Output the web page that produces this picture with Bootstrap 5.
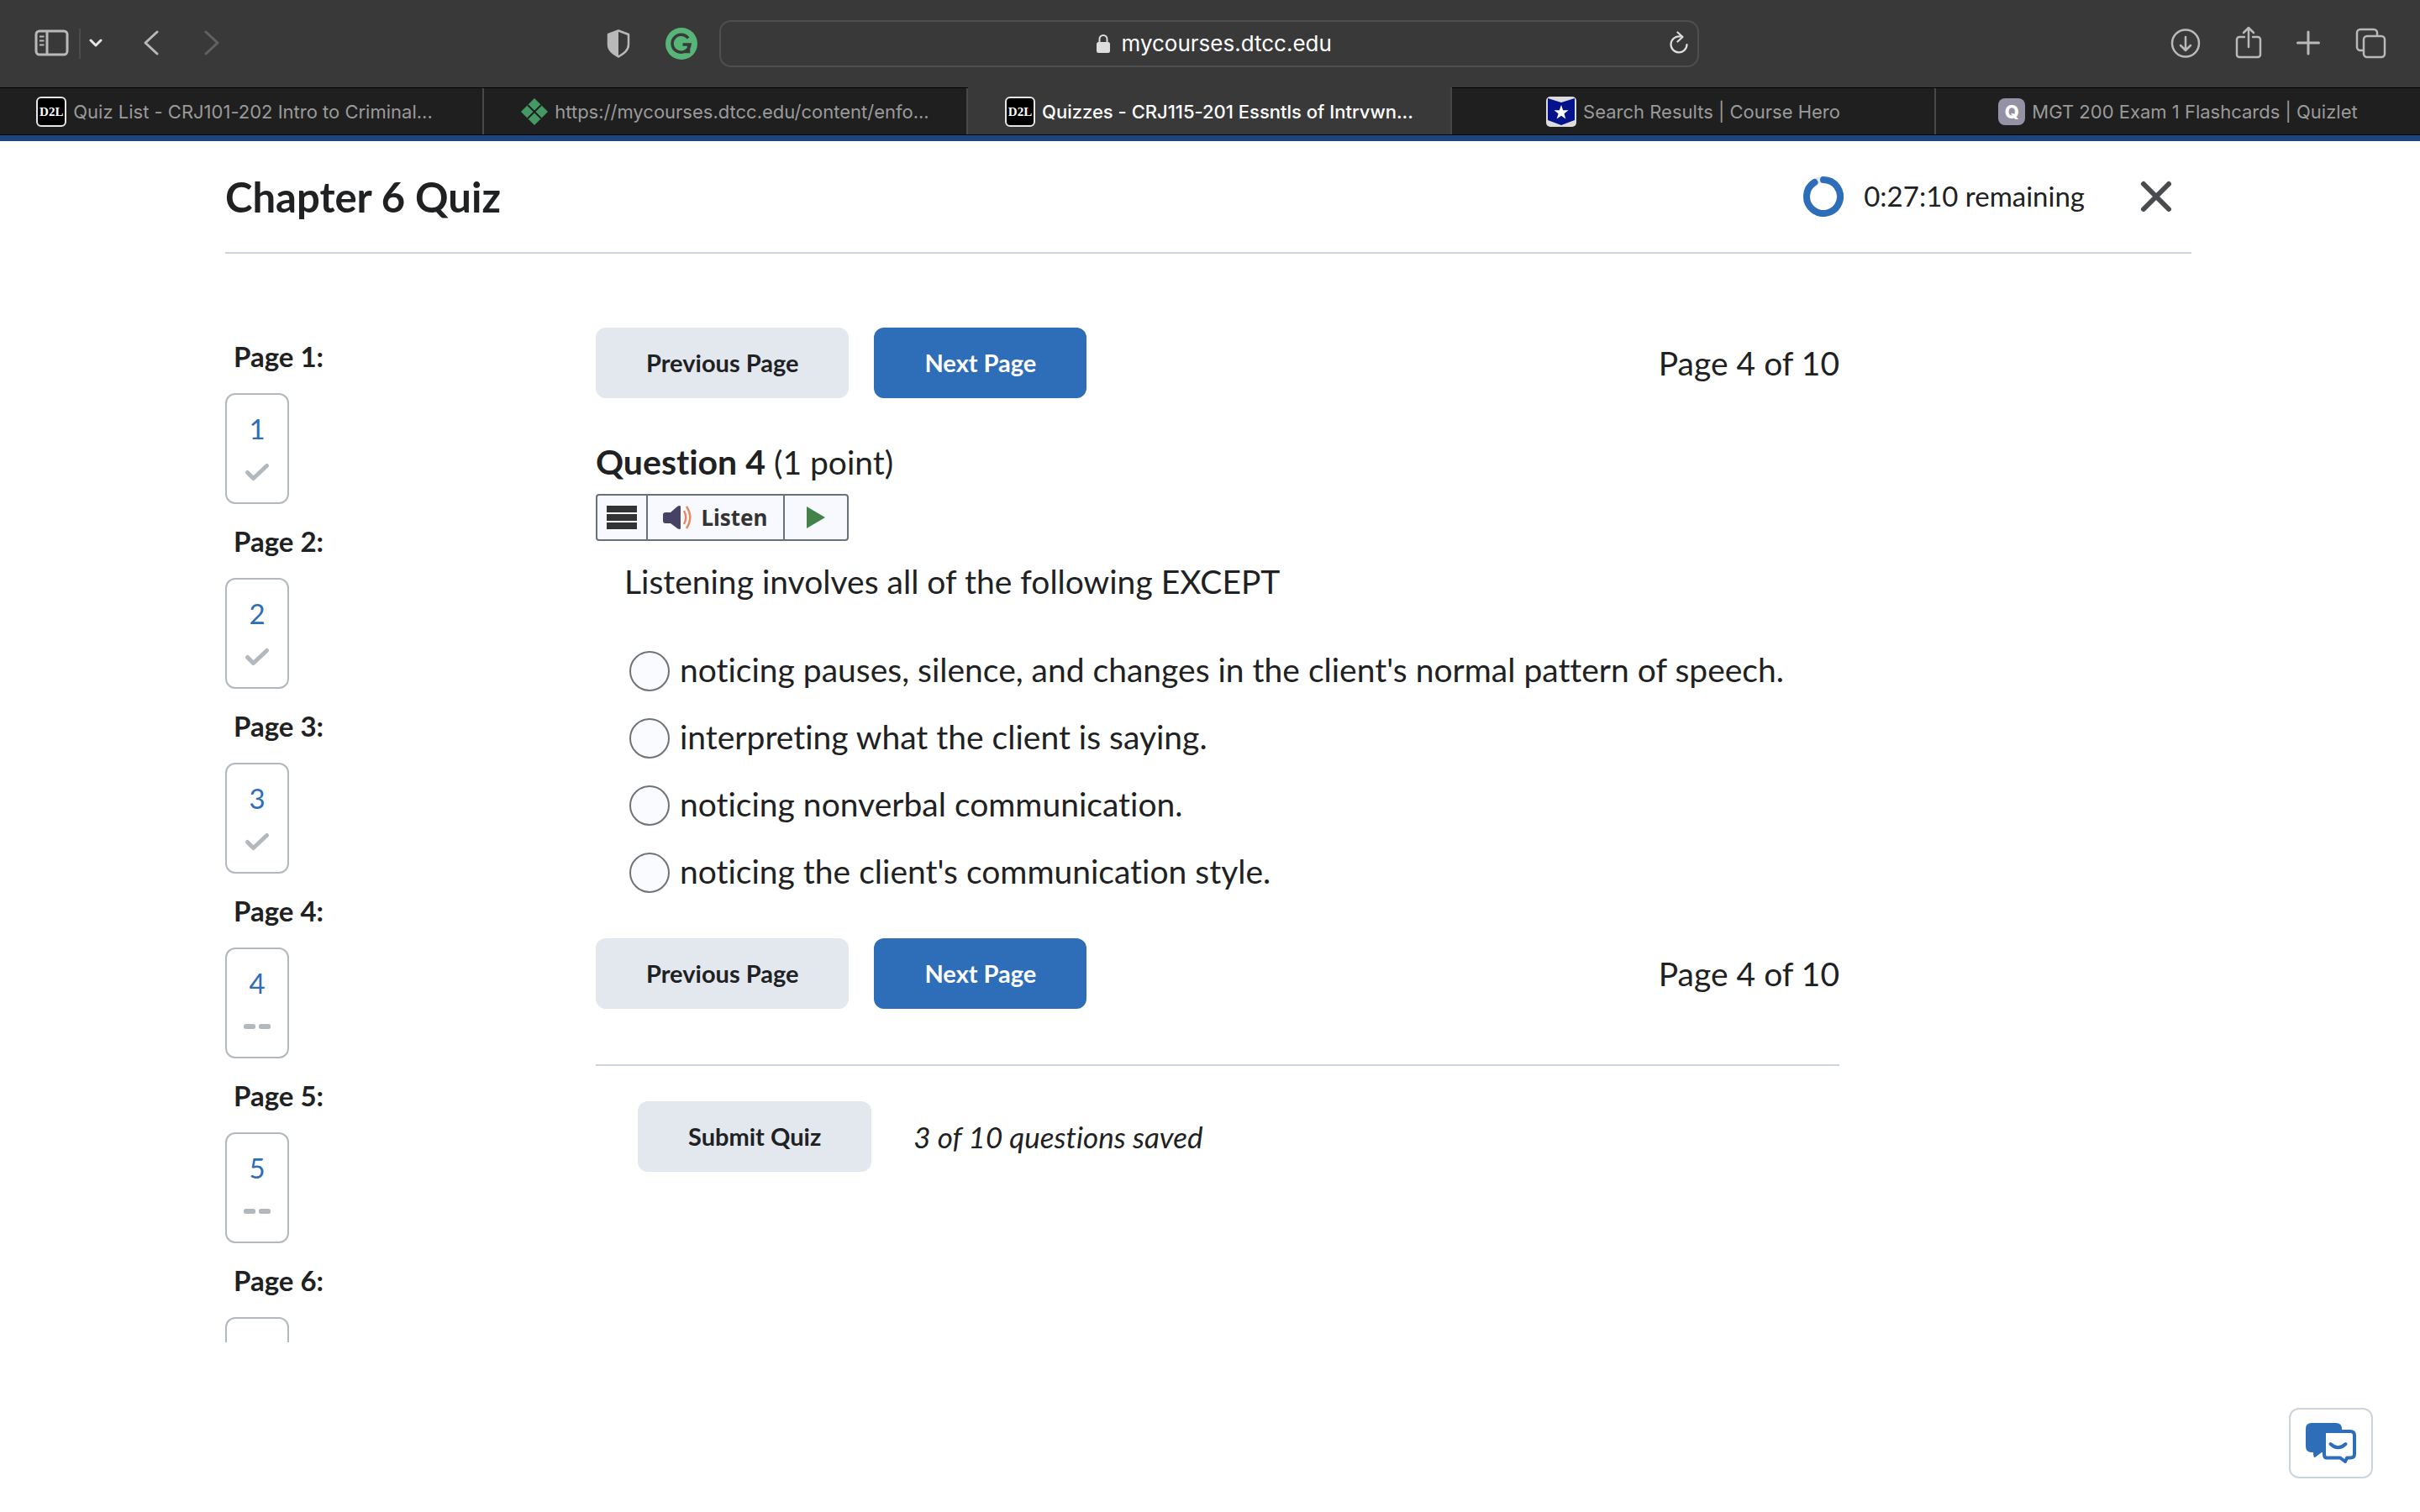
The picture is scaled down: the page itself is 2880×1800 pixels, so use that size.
<!DOCTYPE html>
<html lang="en">
<head>
<meta charset="utf-8">
<meta name="viewport" content="width=device-width, initial-scale=1">
<title>Quizzes - CRJ115-201</title>
<link rel="stylesheet" href="https://cdn.jsdelivr.net/npm/bootstrap@5.3.0/dist/css/bootstrap.min.css">
<style>
  body { font-family: Lato, sans-serif; color: #202122; background: #fff; font-size: 33px; min-height: 100vh; font-variant-ligatures: none; }
  svg { display: block; flex: none; }
  .plain-btn { background: none; border: 0; padding: 0; color: inherit; display: block; }

  /* browser chrome */
  .chrome-ui { font-family: Inter, sans-serif; color: #b9b9b9; }
  .toolbar { background: #393939; height: 104px; padding: 0 40px 0 38px; display: grid; grid-template-columns: 1fr 1166px 1fr; align-items: center; }
  .toolbar-left { padding-right: 26px; }
  .tool-rule { width: 2px; height: 36px; background: #4c4c4c; margin: 0 10px 0 12px; }
  .ext-btn { margin-left: 42px; }
  .tools { gap: 41px; }
  .address { height: 56px; border: 2px solid #4f4f4f; border-radius: 14px; color: #fff; position: relative; }
  .address input { background: none; border: 0; padding: 0; color: #fff; width: 252px; font-size: 26px; line-height: 32px; outline: 0; }
  .address .lock { margin: 0 13px 0 12px; }
  .address .plain-btn { position: absolute; right: 10px; top: 10px; }
  .tab-strip { border-top: 1px solid #000; border-bottom: 1px solid #000; height: 57px; background: #1f1f1f; }
  .tab-strip a { width: 20%; color: #9a9a9a; text-decoration: none; font-size: 22px; line-height: 28px; border-right: 2px solid #474747; gap: 8px; white-space: nowrap; }
  .tab-strip a:last-child { border-right: 0; }
  .tab-strip a.current { background: #393939; color: #fff; font-weight: 500; margin-top: -1px; padding-top: 1px; }
  .fav { width: 36px; height: 36px; flex: none; }
  .fav-d2l { background: #000; border: 2px solid #e6e6e6; border-radius: 6px; color: #fff; font: bold 15px/32px "Liberation Serif", serif; text-align: center; }
  .fav-q { width: 32px; height: 32px; background: #9492a4; border-radius: 8px; color: #fff; font-weight: 800; font-size: 22px; line-height: 32px; text-align: center; }
  .brand-line { height: 7px; background: #1c457d; }

  /* quiz */
  .quiz-shell { padding: 0 272px 0 268px; }
  .quiz-head { height: 132px; box-sizing: content-box; border-bottom: 2px solid #cdd5dc; }
  .quiz-head h1 { font-size: 49px; line-height: 56px; font-weight: 700; margin: 0; }
  .timer { gap: 24px; margin-right: 64px; }
  .quiz-head .plain-btn { margin-right: 21px; color: #494c4e; }
  .quiz-body { padding-top: 78px; }
  .page-nav { width: 441px; flex: none; height: calc(100vh - 582px); overflow: hidden; }
  .page-nav h2 { font-size: 33px; line-height: 88px; font-weight: 700; margin: 0; padding-left: 10px; }
  .q-box { width: 76px; height: 132px; border: 2px solid #b1b9be; border-radius: 12px; color: #2e6db8; text-decoration: none; line-height: 40px; padding-top: 20px; gap: 16px; }
  .quiz-main { flex: 1 1 auto; max-width: 1480px; padding-top: 10px; font-size: 39px; line-height: 48px; }
  .d2l-btn { --bs-btn-font-size: 29px; --bs-btn-font-weight: 700; --bs-btn-line-height: 36px; --bs-btn-padding-x: 60px; --bs-btn-border-width: 0; --bs-btn-border-radius: 12px; --bs-btn-color: #202122; --bs-btn-bg: #e3e8ef; --bs-btn-hover-bg: #cdd5dc; height: 84px; }
  .d2l-btn.primary { --bs-btn-color: #fff; --bs-btn-bg: #2e6db8; --bs-btn-hover-bg: #1c5295; --bs-btn-hover-color: #fff; }
  .pager .d-flex { gap: 30px; }
  .question h2 { font-size: 39px; line-height: 48px; font-weight: 400; margin: 52px 0 14px; }
  .question h2 b { font-size: 41px; }
  .reader { display: inline-flex; height: 56px; border: 2px solid #6a7279; border-radius: 4px; background: #f8f9fe; vertical-align: top; }
  .reader button { display: flex; align-items: center; justify-content: center; font: 700 26px/32px "Noto Sans", sans-serif; color: #333; gap: 9px; }
  .reader button + button { border-left: 2px solid #6a7279; }
  .r-menu { width: 58px; } .r-listen { width: 163px; } .r-play { width: 76px; }
  .prompt { margin: 24px 0 43px 34px; }
  .answers { padding-left: 40px; margin-bottom: 38px; }
  .answers .form-check { height: 80px; padding: 0; margin: 0; gap: 12px; }
  .answers .form-check-input { width: 48px; height: 48px; margin: 0; float: none; border: 2px solid #6e7376; background-color: #f9fbff; flex: none; }
  .answers label { padding-bottom: 4px; }
  .submit-row { border-top: 2px solid #cdd5dc; margin-top: 66px; padding: 42px 0 0 50px; gap: 50px; font-size: 35px; }
  .chat-btn { position: fixed; right: 56px; bottom: 40px; width: 100px; height: 84px; background: #fff; border: 2px solid #cdd5dc; border-radius: 12px; padding: 0; display: flex; align-items: center; justify-content: center; }
</style>
<script src="https://cdn.jsdelivr.net/npm/bootstrap@5.3.0/dist/js/bootstrap.bundle.min.js"></script>
</head>
<body>
<div class="chrome-ui">
  <div class="toolbar">
    <div class="toolbar-left d-flex align-items-center">
      <button class="plain-btn" aria-label="Sidebar"><svg width="44" height="36" viewBox="0 0 44 36" fill="none" stroke="#b9b9b9" stroke-width="3"><rect x="5" y="3" width="37" height="28" rx="4"/><path d="M18 3v28"/><path d="M9 9.500h5.500M9 14.500h5.500M9 19.500h5.500" stroke-width="2"/></svg></button>
      <span class="tool-rule"></span>
      <button class="plain-btn" aria-label="Tab groups"><svg width="16" height="36" viewBox="0 0 16 36" fill="none" stroke="#e6e6e6" stroke-width="3" stroke-linecap="round" stroke-linejoin="round"><path d="M2 14l6 6 6-6"/></svg></button>
      <button class="plain-btn ms-5" aria-label="Back"><svg width="20" height="36" viewBox="0 0 20 36" fill="none" stroke="#b9b9b9" stroke-width="3" stroke-linecap="round" stroke-linejoin="round"><path d="M17 4L3 17l14 13"/></svg></button>
      <button class="plain-btn ms-5" aria-label="Forward"><svg width="24" height="36" viewBox="0 0 24 36" fill="none" stroke="#616161" stroke-width="3" stroke-linecap="round" stroke-linejoin="round"><path d="M7 4l14 13L7 30"/></svg></button>
      <button class="plain-btn ms-auto" aria-label="Privacy report"><svg width="28" height="34" viewBox="0 0 28 34"><path d="M14 1.500L2 6v12c0 7 6 11 12 14.500C20 29 26 25 26 18V6z" fill="none" stroke="#b9b9b9" stroke-width="2.500" stroke-linejoin="round"/><path d="M14 1L2 6v12c0 7 6 11 12 14.500z" fill="#b9b9b9"/></svg></button>
      <button class="plain-btn ext-btn" aria-label="Grammarly"><svg width="38" height="38" viewBox="0 0 38 38"><circle cx="19" cy="19" r="19" fill="#57b578"/><path d="M27 12.500A10.500 10.500 0 1 0 29 20H20.500M27.500 20v8.500h-6" fill="none" stroke="#393939" stroke-width="3.500"/></svg></button>
    </div>
    <div class="address d-flex align-items-center justify-content-center">
      <svg width="18" height="24" viewBox="0 0 18 24" class="lock"><path d="M4.500 11V6.500a4.500 4.500 0 0 1 9 0V11" fill="none" stroke="#dedede" stroke-width="2"/><rect x="1" y="10" width="16" height="13" rx="2.500" fill="#dedede"/></svg>
      <input type="text" value="mycourses.dtcc.edu" aria-label="Address">
      <button class="plain-btn" aria-label="Reload"><svg width="24" height="30" viewBox="0 0 24 30" fill="none" stroke="#dedede" stroke-width="2.200" stroke-linecap="round" stroke-linejoin="round"><path d="M13.500 7.500A9.500 9.500 0 1 0 21.500 17M10.500 2.500l6 5.500-6 5.500"/></svg></button>
    </div>
    <div class="tools d-flex align-items-center justify-content-end">
      <button class="plain-btn" aria-label="Downloads"><svg width="36" height="36" viewBox="0 0 36 36" fill="none" stroke="#b9b9b9" stroke-width="2.500" stroke-linecap="round" stroke-linejoin="round"><circle cx="18" cy="17.500" r="16"/><path d="M18 10v15.500M12 20l6 6 6-6"/></svg></button>
      <button class="plain-btn" aria-label="Share"><svg width="32" height="42" viewBox="0 0 32 42" fill="none" stroke="#b9b9b9" stroke-width="2.500" stroke-linecap="round" stroke-linejoin="round"><path d="M11 13H5a3 3 0 0 0-3 3v18a3 3 0 0 0 3 3h22a3 3 0 0 0 3-3V16a3 3 0 0 0-3-3h-6M16 25V2M10 8l6-6 6 6"/></svg></button>
      <button class="plain-btn" aria-label="New tab"><svg width="28" height="32" viewBox="0 0 28 32" fill="none" stroke="#b9b9b9" stroke-width="3" stroke-linecap="round"><path d="M14 2v26M1.500 15h25"/></svg></button>
      <button class="plain-btn" aria-label="Tab overview"><svg width="38" height="38" viewBox="0 0 38 38" fill="none" stroke="#b9b9b9" stroke-width="2.500"><rect x="11" y="10" width="25" height="25" rx="4"/><path d="M11 27H7a4 4 0 0 1-4-4V6a4 4 0 0 1 4-4h16a4 4 0 0 1 4 4v4"/></svg></button>
    </div>
  </div>
  <nav class="tab-strip d-flex">
    <a href="#" class="d-flex align-items-center justify-content-center pe-3"><span class="fav fav-d2l">D2L</span><span>Quiz List - CRJ101-202 Intro to Criminal...</span></a>
    <a href="#" class="d-flex align-items-center justify-content-center"><svg width="32" height="32" viewBox="0 0 32 32"><path d="M16 0l16 16-16 16L0 16z" fill="#459a63"/><path d="M8 8l16 16M24 8L8 24" stroke="#1f1f1f" stroke-width="2"/></svg><span>https://mycourses.dtcc.edu/content/enfo...</span></a>
    <a href="#" class="current d-flex align-items-center justify-content-center"><span class="fav fav-d2l">D2L</span><span>Quizzes - CRJ115-201 Essntls of Intrvwn...</span></a>
    <a href="#" class="d-flex align-items-center justify-content-center"><svg width="36" height="36" viewBox="0 0 36 36"><rect width="36" height="36" rx="5" fill="#dcdcdc"/><path d="M2 2l16 5 16-5v26l-16 6-16-6z" fill="#06128c"/><path d="M18 10l2.200 6.200h6.300l-5 4 1.800 6.300-5.300-3.800-5.300 3.800 1.800-6.300-5-4h6.300z" fill="#fff"/></svg><span>Search Results | Course Hero</span></a>
    <a href="#" class="d-flex align-items-center justify-content-center"><span class="fav fav-q">Q</span><span>MGT 200 Exam 1 Flashcards | Quizlet</span></a>
  </nav>
  <div class="brand-line"></div>
</div>

<div class="quiz-shell">
  <header class="quiz-head d-flex align-items-center">
    <h1>Chapter 6 Quiz</h1>
    <div class="timer ms-auto d-flex align-items-center">
      <svg width="48" height="48" viewBox="0 0 48 48" fill="none" stroke-width="8"><circle cx="24" cy="24" r="20" stroke="#e3e8ef"/><path d="M24 4A20 20 0 1 1 13.500 7" stroke="#2e6db8" stroke-linecap="round"/></svg>
      <span>0:27:10 remaining</span>
    </div>
    <button class="plain-btn" aria-label="Close"><svg width="42" height="42" viewBox="0 0 42 42" fill="none" stroke="currentColor" stroke-width="6" stroke-linecap="round"><path d="M6 6l30 30M36 6L6 36"/></svg></button>
  </header>

  <div class="quiz-body d-flex">
    <nav class="page-nav" aria-label="Questions">
      <h2>Page 1:</h2>
      <a href="#" class="q-box d-flex flex-column align-items-center"><span>1</span><svg width="32" height="32" viewBox="0 0 32 32" fill="none" stroke="#b1b9be" stroke-width="5" stroke-linecap="round" stroke-linejoin="round"><path d="M4.500 16.500l7 7L27.500 8.500"/></svg></a>
      <h2>Page 2:</h2>
      <a href="#" class="q-box d-flex flex-column align-items-center"><span>2</span><svg width="32" height="32" viewBox="0 0 32 32" fill="none" stroke="#b1b9be" stroke-width="5" stroke-linecap="round" stroke-linejoin="round"><path d="M4.500 16.500l7 7L27.500 8.500"/></svg></a>
      <h2>Page 3:</h2>
      <a href="#" class="q-box d-flex flex-column align-items-center"><span>3</span><svg width="32" height="32" viewBox="0 0 32 32" fill="none" stroke="#b1b9be" stroke-width="5" stroke-linecap="round" stroke-linejoin="round"><path d="M4.500 16.500l7 7L27.500 8.500"/></svg></a>
      <h2>Page 4:</h2>
      <a href="#" class="q-box d-flex flex-column align-items-center"><span>4</span><svg width="32" height="32" viewBox="0 0 32 32" fill="#b1b9be"><rect x="0" y="13" width="14" height="6" rx="2.500"/><rect x="18" y="13" width="14" height="6" rx="2.500"/></svg></a>
      <h2>Page 5:</h2>
      <a href="#" class="q-box d-flex flex-column align-items-center"><span>5</span><svg width="32" height="32" viewBox="0 0 32 32" fill="#b1b9be"><rect x="0" y="13" width="14" height="6" rx="2.500"/><rect x="18" y="13" width="14" height="6" rx="2.500"/></svg></a>
      <h2>Page 6:</h2>
      <a href="#" class="q-box d-flex" aria-label="Question 6"></a>
    </nav>

    <main class="quiz-main">
      <div class="pager d-flex align-items-center justify-content-between">
        <div class="d-flex"><button class="btn d2l-btn">Previous Page</button><button class="btn d2l-btn primary">Next Page</button></div>
        <span>Page 4 of 10</span>
      </div>
      <section class="question">
        <h2><b>Question 4</b> (1 point)</h2>
        <div class="reader">
          <button class="plain-btn r-menu" aria-label="Reader menu"><svg width="36" height="28" viewBox="0 0 36 28" fill="#333"><path d="M0 0h36v8H0zM0 10h36v8H0zM0 20h36v8H0z"/></svg></button>
          <button class="plain-btn r-listen"><svg width="36" height="28" viewBox="0 0 36 28"><path d="M0 11q0-3 3-3h6L17 1q3-2 4 0v26q-1 2-4 0l-8-6H3q-3 0-3-3z" fill="#454264"/><path d="M25 6q4.500 8 0 16M28 1q8.500 13 0 26" fill="none" stroke="#e58a60" stroke-width="2.500"/></svg>Listen</button>
          <button class="plain-btn r-play" aria-label="Play"><svg width="22" height="26" viewBox="0 0 22 26"><path d="M0 0l22 13L0 26z" fill="#43834a"/></svg></button>
        </div>
        <p class="prompt">Listening involves all of the following EXCEPT</p>
        <div class="answers">
          <div class="form-check d-flex align-items-center"><input class="form-check-input" type="radio" name="answer" id="a1"><label for="a1">noticing pauses, silence, and changes in the client's normal pattern of speech.</label></div>
          <div class="form-check d-flex align-items-center"><input class="form-check-input" type="radio" name="answer" id="a2"><label for="a2">interpreting what the client is saying.</label></div>
          <div class="form-check d-flex align-items-center"><input class="form-check-input" type="radio" name="answer" id="a3"><label for="a3">noticing nonverbal communication.</label></div>
          <div class="form-check d-flex align-items-center"><input class="form-check-input" type="radio" name="answer" id="a4"><label for="a4">noticing the client's communication style.</label></div>
        </div>
      </section>
      <div class="pager d-flex align-items-center justify-content-between">
        <div class="d-flex"><button class="btn d2l-btn">Previous Page</button><button class="btn d2l-btn primary">Next Page</button></div>
        <span>Page 4 of 10</span>
      </div>
      <div class="submit-row d-flex align-items-center"><button class="btn d2l-btn">Submit Quiz</button><em>3 of 10 questions saved</em></div>
    </main>
  </div>
</div>

<button class="chat-btn" aria-label="Chat"><svg width="62" height="50" viewBox="0 0 62 50"><path d="M8 1h29q7 0 7 7v28H20l-8 6q-2 0-2-6H8q-7 0-7-7V8q0-7 7-7z" fill="#2e6db8"/><path d="M24 11h30q5 0 5 5v22q0 4.500-5 4.500h-4L48 47l-6-4.500H26q-3 0-3-4V11z" fill="#fff" stroke="#2e6db8" stroke-width="4" stroke-linejoin="round"/><path d="M30.500 26q9 8.500 18 0" fill="none" stroke="#2e6db8" stroke-width="4" stroke-linecap="round"/></svg></button>
</body>
</html>
